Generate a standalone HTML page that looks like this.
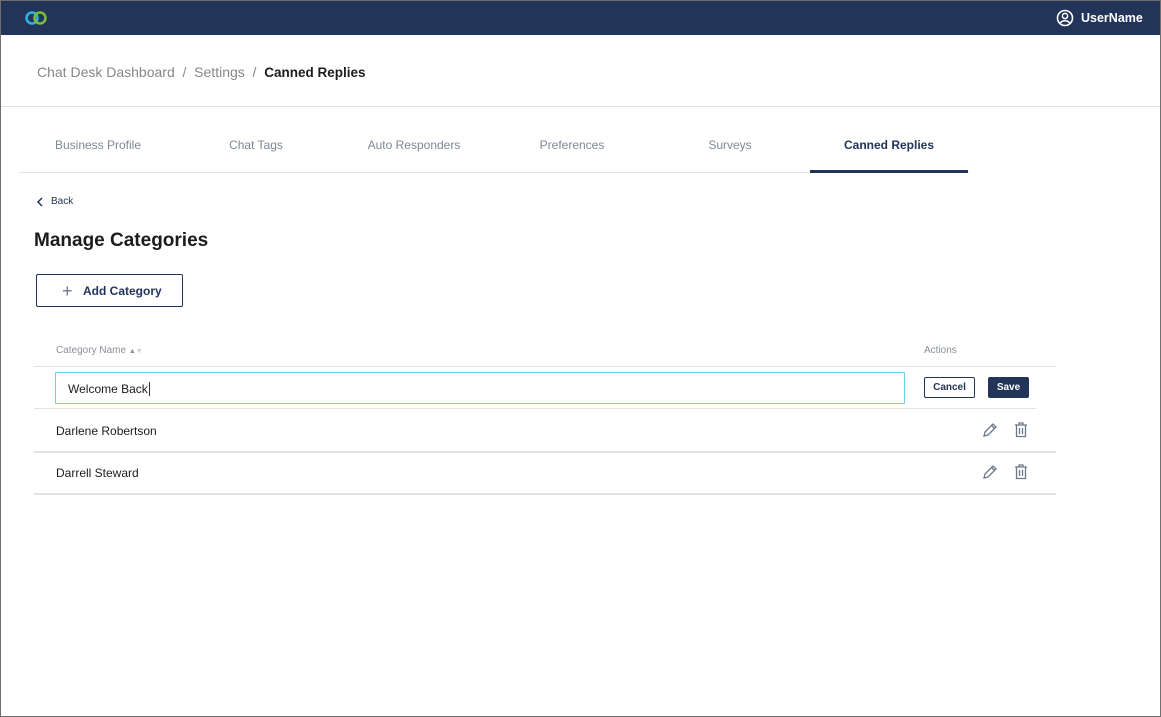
<!DOCTYPE html><html><head><style>
*{box-sizing:border-box;margin:0;padding:0}
body{width:1161px;height:717px;font-family:"Liberation Sans",sans-serif;background:#fff;position:relative;overflow:hidden}
.a{position:absolute;white-space:nowrap}
.hdr{left:0;top:0;width:1161px;height:35px;background:#233459}
.tab{top:138px;font-size:12px;color:#7e8796;width:158px;text-align:center}
.line{height:1px;background:#dfe2e7}
.ic{stroke:#6d778a;fill:none;stroke-width:1.3}
</style></head><body>
<div class="a hdr"></div>
<svg class="a" style="left:23px;top:10px" width="27" height="16" viewBox="0 0 27 16"><circle cx="9" cy="8" r="5.5" fill="none" stroke="#2eb3e6" stroke-width="2.5"/><circle cx="17" cy="8" r="5.5" fill="none" stroke="#7dbd3a" stroke-width="2.5"/></svg>
<svg class="a" style="left:1056px;top:9px" width="18" height="18" viewBox="0 0 18 18"><circle cx="9" cy="9" r="7.5" fill="none" stroke="#fff" stroke-width="1.6"/><circle cx="9" cy="7" r="2.6" fill="none" stroke="#fff" stroke-width="1.5"/><path d="M4.5 14c1.5-3 7.5-3 9 0" fill="none" stroke="#fff" stroke-width="1.5"/></svg>
<div class="a" style="left:1081px;top:11px;color:#fff;font-size:12.5px;font-weight:bold">UserName</div>
<div class="a" style="left:37px;top:64px;font-size:14px;color:#878787">Chat Desk Dashboard &nbsp;/&nbsp; Settings &nbsp;/&nbsp; <span style="color:#1c1c1c;font-weight:bold;font-size:13.5px">Canned Replies</span></div>
<div class="a line" style="left:0;top:106px;width:1161px"></div>
<div class="a tab" style="left:19px">Business Profile</div>
<div class="a tab" style="left:177px">Chat Tags</div>
<div class="a tab" style="left:335px">Auto Responders</div>
<div class="a tab" style="left:493px">Preferences</div>
<div class="a tab" style="left:651px">Surveys</div>
<div class="a tab" style="left:810px;color:#22345a;font-weight:bold">Canned Replies</div>
<div class="a line" style="left:19px;top:172px;width:950px"></div>
<div class="a" style="left:810px;top:170px;width:158px;height:3px;background:#233459"></div>
<svg class="a" style="left:36px;top:197px" width="8" height="10"><path d="M6 1L2 5l4 4" fill="none" stroke="#233459" stroke-width="1.5"/></svg>
<div class="a" style="left:51px;top:196px;font-size:10px;color:#233459">Back</div>
<div class="a" style="left:34px;top:230px;font-size:19px;color:#1c1c1c;font-weight:bold">Manage Categories</div>
<div class="a" style="left:36px;top:274px;width:147px;height:33px;border:1px solid #233459;border-radius:2px"></div>
<div class="a" style="left:62px;top:281px;font-size:18px;color:#6d778a;font-weight:300">+</div>
<div class="a" style="left:83px;top:284px;font-size:12px;color:#233459;font-weight:bold">Add Category</div>
<div class="a" style="left:56px;top:345px;font-size:10px;color:#8a8f99">Category Name <span style="font-size:7px">▲</span><span style="font-size:7px;color:#ccc">▼</span></div>
<div class="a" style="left:924px;top:345px;font-size:10px;color:#8a8f99">Actions</div>
<div class="a line" style="left:34px;top:366px;width:1022px"></div>
<div class="a" style="left:55px;top:372px;width:850px;height:32px;border:1px solid #6fd0ea;border-radius:1px"></div>
<div class="a" style="left:68px;top:382px;font-size:12px;color:#1c1c1c">Welcome Back<span style="border-left:1px solid #333;margin-left:1px"></span></div>
<div class="a" style="left:924px;top:377px;width:51px;height:21px;border:1px solid #233459;border-radius:2px;font-size:10px;color:#233459;text-align:center;line-height:20px;font-weight:bold">Cancel</div>
<div class="a" style="left:988px;top:377px;width:41px;height:21px;background:#233459;border-radius:2px;font-size:10px;color:#fff;text-align:center;line-height:22px;font-weight:bold">Save</div>
<div class="a line" style="left:34px;top:408px;width:1002px"></div>
<div class="a" style="left:56px;top:424px;font-size:12px;color:#1c1c1c">Darlene Robertson</div>
<div class="a line" style="left:34px;top:451px;width:1022px;height:2px"></div>
<div class="a" style="left:56px;top:466px;font-size:12px;color:#1c1c1c">Darrell Steward</div>
<div class="a line" style="left:34px;top:493px;width:1022px;height:2px"></div>
<svg class="a" style="left:982px;top:422px" width="16" height="16"><path class="ic" d="M2 14l1-4 8-8 3 3-8 8z M9.5 3.5l3 3"/></svg>
<svg class="a" style="left:1014px;top:422px" width="14" height="16"><path class="ic" d="M1 3h12M5 3V1h4v2M2.5 3v11.5h9V3M5.5 6v6M8.5 6v6"/></svg>
<svg class="a" style="left:982px;top:464px" width="16" height="16"><path class="ic" d="M2 14l1-4 8-8 3 3-8 8z M9.5 3.5l3 3"/></svg>
<svg class="a" style="left:1014px;top:464px" width="14" height="16"><path class="ic" d="M1 3h12M5 3V1h4v2M2.5 3v11.5h9V3M5.5 6v6M8.5 6v6"/></svg>
<div class="a" style="left:0;top:0;width:1161px;height:717px;border:1px solid #6f6f6f;pointer-events:none"></div>
</body></html>
